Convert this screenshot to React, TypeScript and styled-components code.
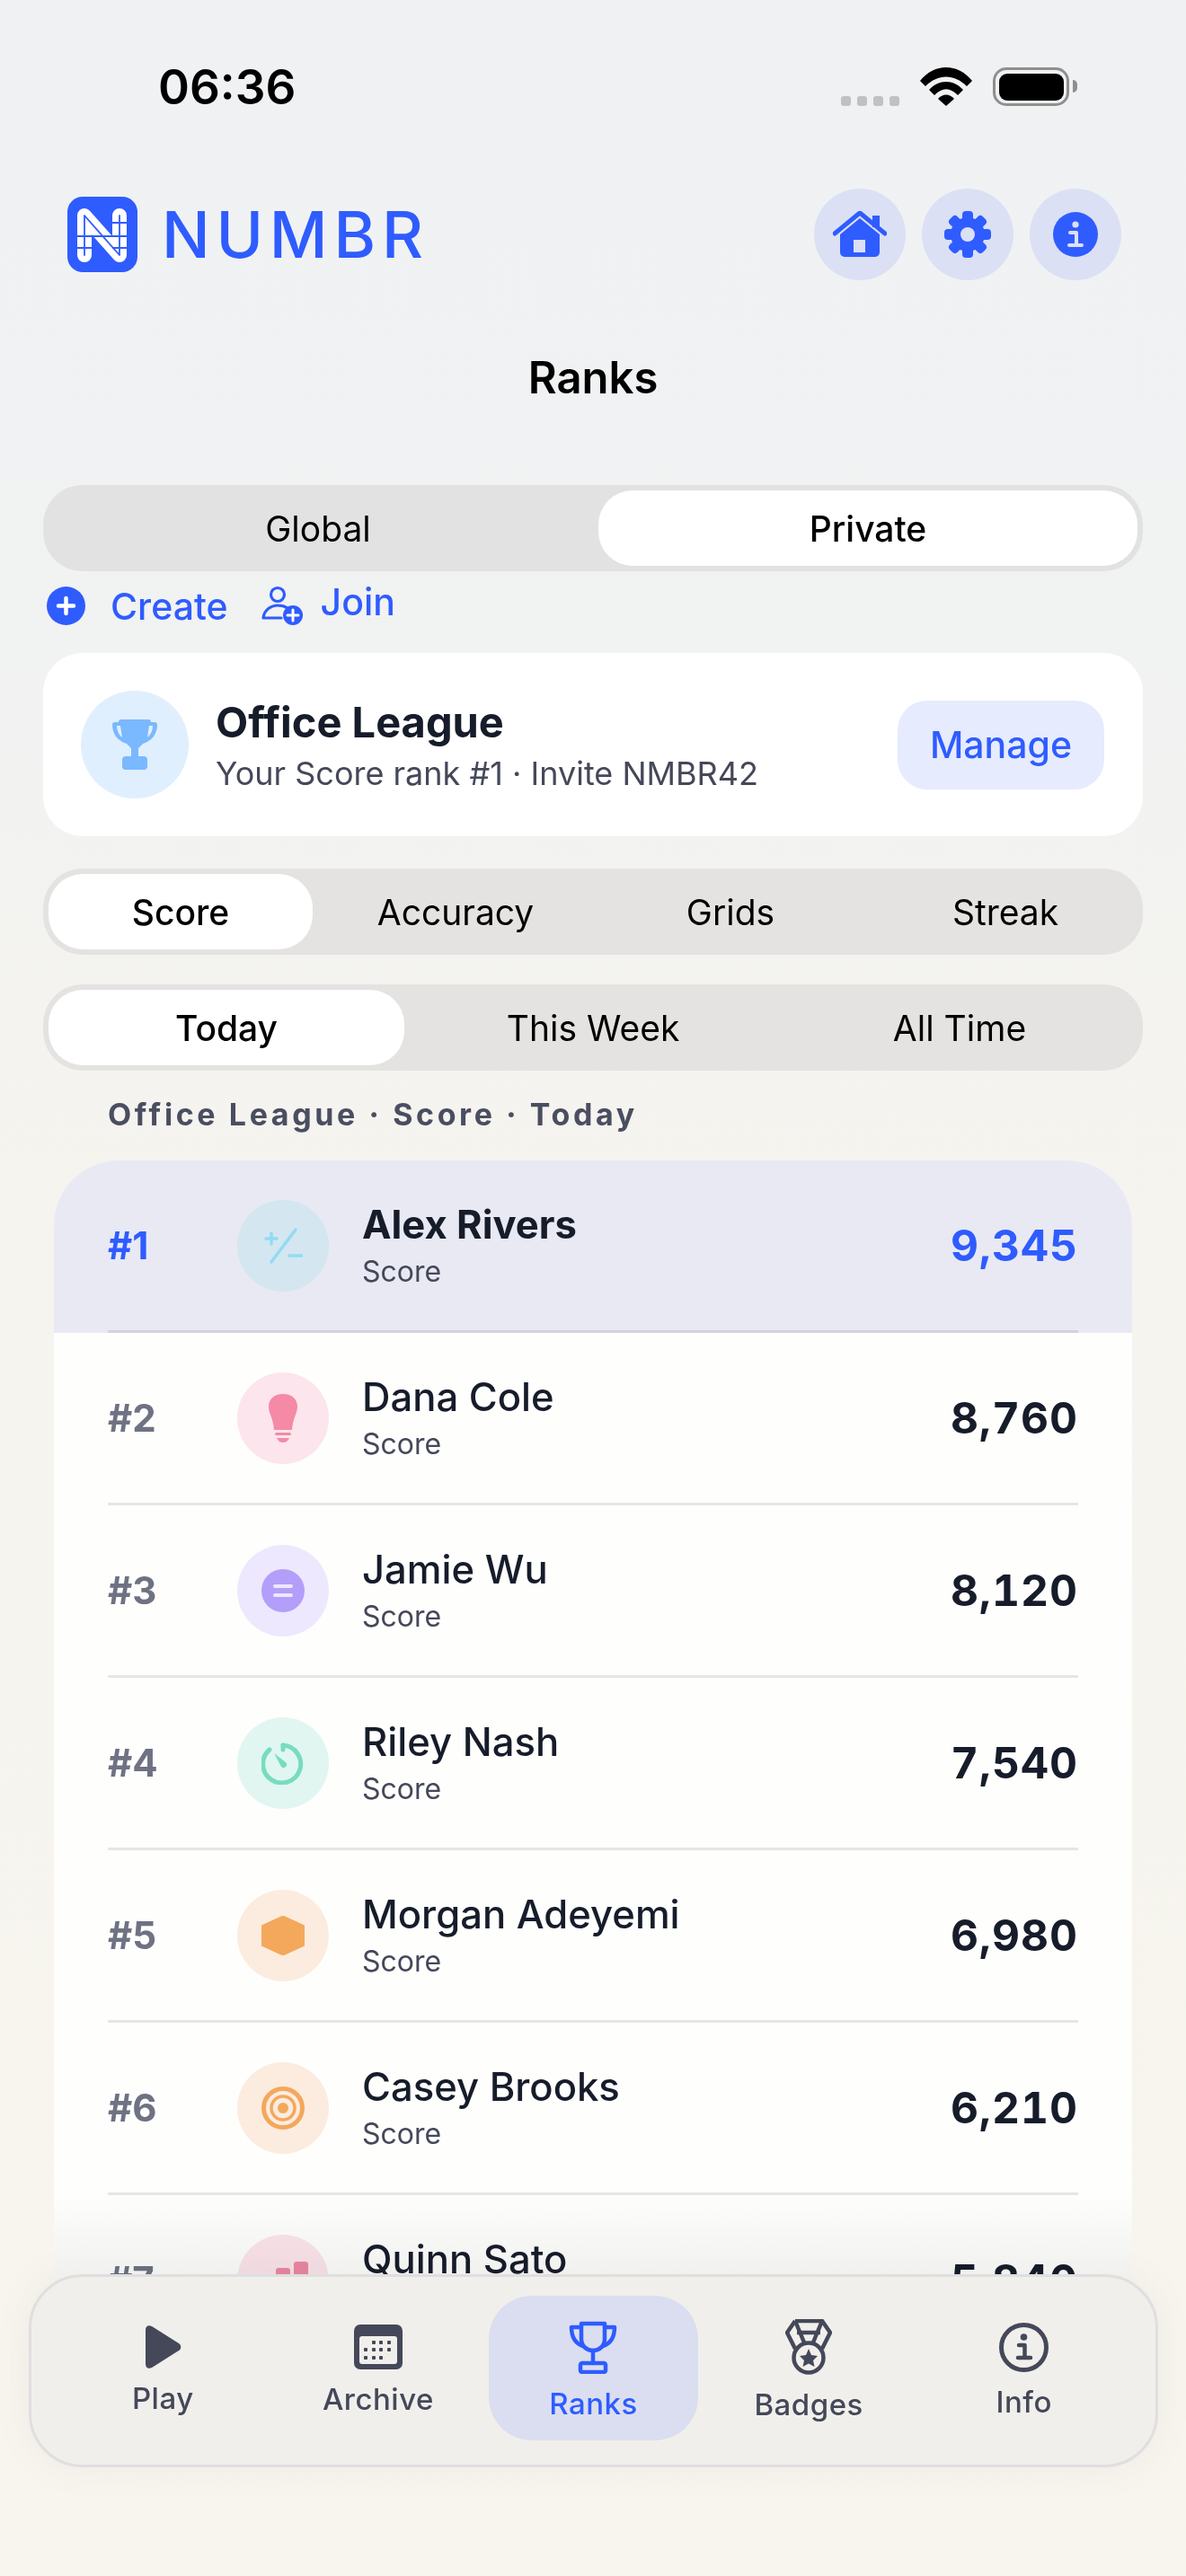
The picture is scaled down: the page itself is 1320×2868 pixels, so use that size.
import React from 'react';
import styled, { createGlobalStyle } from 'styled-components';

const BLUE = '#2f5cff';
const INK = '#161c2a';
const SLATE = '#454859';

const GlobalStyle = createGlobalStyle`
	html, body {
		margin: 0;
		padding: 0;
	}
	* {
		box-sizing: border-box;
	}
	body {
		font-family: Inter, "Liberation Sans", sans-serif;
	}
`;

const Page = styled.div`
	width: 1320px;
	height: 2868px;
	display: flex;
	flex-direction: column;
	overflow: hidden;
	background: linear-gradient(180deg, #f0f1f3 0%, #f1f2f2 25%, #f6f4ee 50%, #f8f5ef 100%);
`;

const StatusBar = styled.div`
	height: 140px;
	padding: 75px 130px 0 176px;
	display: flex;
	justify-content: space-between;
	align-items: flex-start;
`;

const Clock = styled.div`
	font-size: 53px;
	line-height: 44px;
	font-weight: 600;
	color: #000;
`;

const StatusIcons = styled.div`
	display: flex;
	align-items: flex-end;
	gap: 23px;
`;

const SignalDots = styled.div`
	display: flex;
	gap: 7px;
`;

const SignalDot = styled.span`
	width: 11px;
	height: 11px;
	border-radius: 3px;
	background: #c1c1c1;
`;

const Battery = styled.div`
	position: relative;
	width: 85px;
	height: 43px;
	border: 3.5px solid #8f8f8f;
	border-radius: 15px;
	padding: 3.5px;

	&::before {
		content: '';
		display: block;
		height: 100%;
		background: #000;
		border-radius: 9px;
	}

	&::after {
		content: '';
		position: absolute;
		right: -12px;
		top: 11px;
		width: 5px;
		height: 14px;
		background: #8f8f8f;
		border-radius: 0 5px 5px 0;
	}
`;

const Header = styled.div`
	height: 102px;
	margin-top: 70px;
	padding: 0 72px 0 75px;
	display: flex;
	justify-content: space-between;
	align-items: center;
`;

const Brand = styled.div`
	display: flex;
	align-items: center;
	gap: 27px;
`;

const LogoMark = styled.svg`
	width: 78px;
	height: 84px;
	display: block;
`;

const Wordmark = styled.div`
	font-size: 71px;
	line-height: 72px;
	font-weight: 550;
	letter-spacing: 6.8px;
	color: ${BLUE};
`;

const HeaderActions = styled.div`
	display: flex;
	gap: 18px;
`;

const RoundButton = styled.div`
	width: 102px;
	height: 102px;
	border-radius: 50%;
	background: #dbe0f4;
	display: flex;
	align-items: center;
	justify-content: center;
`;

const Title = styled.div`
	margin-top: 84px;
	height: 50px;
	line-height: 50px;
	text-align: center;
	font-size: 49px;
	font-weight: 600;
	color: #000;
`;

const Segment = styled.div<{ $cols: number }>`
	margin: 0 48px;
	height: 96px;
	padding: 6px;
	border-radius: 44px;
	display: grid;
	grid-template-columns: repeat(${(p) => p.$cols}, 1fr);
	gap: 12px;
	background: #e4e3e1;
`;

const ModeSegment = styled(Segment)`
	margin-top: 94px;
	background: #e2e2e2;
`;

const SegmentItem = styled.div<{ $active?: boolean }>`
	display: flex;
	align-items: center;
	justify-content: center;
	border-radius: 38px;
	font-size: 39px;
	font-weight: ${(p) => (p.$active ? 500 : 400)};
	color: #000;
	background: ${(p) => (p.$active ? '#fff' : 'transparent')};
`;

const ActionRow = styled.div`
	margin-top: 16px;
	height: 44px;
	padding-left: 52px;
	display: flex;
	align-items: center;
`;

const ActionLabel = styled.span<{ $raised?: boolean }>`
	font-size: 41px;
	font-weight: 500;
	color: ${BLUE};
	line-height: 44px;
	transform: translateY(${(p) => (p.$raised ? -4 : 1)}px);
`;

const CreateLabel = styled(ActionLabel)`
	margin: 0 37px 0 28px;
`;

const JoinLabel = styled(ActionLabel)`
	margin-left: 20px;
`;

const LeagueCard = styled.div`
	margin: 31px 48px 36px;
	height: 204px;
	padding: 0 43px 0 42px;
	border-radius: 44px;
	background: #fff;
	display: flex;
	align-items: center;
`;

const LeagueIcon = styled.div`
	width: 120px;
	height: 120px;
	border-radius: 50%;
	background: #e0effe;
	display: flex;
	align-items: center;
	justify-content: center;
	margin-right: 30px;
`;

const LeagueText = styled.div`
	flex: 1;
	display: flex;
	flex-direction: column;
	gap: 8px;
`;

const LeagueName = styled.div`
	font-size: 47px;
	line-height: 56px;
	font-weight: 700;
	color: ${INK};
`;

const LeagueMeta = styled.div`
	font-size: 36px;
	line-height: 42px;
	font-weight: 400;
	color: ${SLATE};
`;

const ManageButton = styled.div`
	width: 230px;
	height: 99px;
	border-radius: 33px;
	background: #e6ebfd;
	color: ${BLUE};
	font-size: 41px;
	font-weight: 500;
	display: flex;
	align-items: center;
	justify-content: center;
`;

const FilterStack = styled.div`
	display: flex;
	flex-direction: column;
	gap: 33px;
`;

const SectionLabel = styled.div`
	margin: 29px 120px 0;
	height: 40px;
	line-height: 40px;
	font-size: 34px;
	font-weight: 700;
	letter-spacing: 3.6px;
	color: #4a4e61;
`;

const ListArea = styled.div`
	position: relative;
	flex: 1;
	min-height: 0;
	margin: 31px 60px 0;
	overflow: hidden;
	border-radius: 72px 72px 0 0;
	background: #fefefd;

	&::after {
		content: '';
		position: absolute;
		left: 0;
		right: 0;
		bottom: 0;
		height: 90px;
		background: linear-gradient(180deg, #ffffff, #f2f2f2);
		mix-blend-mode: multiply;
	}
`;

const Row = styled.div<{ $me?: boolean }>`
	height: 192px;
	padding: 0 60px;
	background: ${(p) => (p.$me ? '#e8e9f3' : 'transparent')};
`;

const RowInner = styled.div<{ $me?: boolean }>`
	height: 100%;
	display: flex;
	align-items: center;
	border-bottom: 3px solid ${(p) => (p.$me ? '#d2d3de' : '#e6e6e8')};
`;

const Rank = styled.div<{ $me?: boolean }>`
	width: 144px;
	font-size: 42px;
	font-weight: 700;
	color: ${(p) => (p.$me ? BLUE : '#6f7283')};
`;

const Avatar = styled.div<{ $bg: string }>`
	width: 102px;
	height: 102px;
	border-radius: 50%;
	margin-right: 37px;
	background: ${(p) => p.$bg};
	display: flex;
	align-items: center;
	justify-content: center;
`;

const PlayerText = styled.div`
	flex: 1;
	display: flex;
	flex-direction: column;
	gap: 6px;
`;

const PlayerName = styled.div<{ $me?: boolean }>`
	font-size: ${(p) => (p.$me ? 43.6 : 43.6)}px;
	line-height: 52px;
	font-weight: ${(p) => (p.$me ? 700 : 550)};
	color: ${INK};
`;

const PlayerMeta = styled.div`
	font-size: 32px;
	line-height: 40px;
	color: ${SLATE};
`;

const Points = styled.div<{ $me?: boolean }>`
	font-size: 48px;
	font-weight: 700;
	letter-spacing: 1px;
	font-variant-numeric: tabular-nums;
	color: ${(p) => (p.$me ? BLUE : INK)};
`;

const TabBar = styled.div`
	height: 215px;
	margin: 0 31px 121px 32px;
	padding: 21px 30px 27px;
	border: 3px solid #dfdfdf;
	border-radius: 60px;
	background: #f0efeb;
	box-shadow: 0 0 40px rgba(120, 120, 120, 0.08);
	display: grid;
	grid-template-columns: repeat(5, 1fr);
	gap: 7px;
`;

const TabItem = styled.div<{ $active?: boolean }>`
	display: flex;
	flex-direction: column;
	align-items: center;
	justify-content: center;
	gap: 19px;
	border-radius: 48px;
	background: ${(p) => (p.$active ? '#dadef0' : 'transparent')};
	color: ${(p) => (p.$active ? BLUE : SLATE)};
`;

const TabLabel = styled.div`
	font-size: 33px;
	line-height: 28px;
	font-weight: 500;
	letter-spacing: 0.5px;
`;

const WifiIcon = () => (
	<svg width="58" height="43" viewBox="0 0 58 43">
		<path d="M0 15 C16 -5 42 -5 58 15 L52 21 C38 7 20 7 6 21Z M10 25 C21 13 37 13 48 25 L42 31 C33 22 25 22 16 31Z M20 35 C25 29 33 29 38 35 L29 43Z" fill="#000" />
	</svg>
);

const Logo = () => (
	<LogoMark viewBox="0 0 78 84">
		<rect width="78" height="84" rx="17" fill={BLUE} />
		<path d="M19 65 V21 L58 65 V21" fill="none" stroke="#fff" strokeWidth="16" strokeLinecap="round" strokeLinejoin="round" />
		<g fill="none" stroke={BLUE} strokeWidth="1.8">
			<path d="M19 65 V21 L58 65 V21" strokeLinecap="round" strokeLinejoin="round" />
			<path d="M11 44 H66 M11 57 H27 M50 57 H66 M50 29 H66" />
		</g>
	</LogoMark>
);

const HomeIcon = () => (
	<svg width="60" height="52" viewBox="0 0 60 52" fill={BLUE}>
		<path d="M30 8 L8 26 V46 a5 5 0 0 0 5 5 H47 a5 5 0 0 0 5 -5 V26Z M23 32 H36 V46 H23Z" fillRule="evenodd" />
		<path d="M2 25 L30 2 L58 25" fill="none" stroke={BLUE} strokeWidth="5" strokeLinecap="round" strokeLinejoin="round" />
		<rect x="44" y="5" width="8" height="13" />
	</svg>
);

const GearIcon = () => (
	<svg width="52" height="52" viewBox="0 0 52 52">
		<g fill={BLUE}>
			{[0, 45, 90, 135, 180, 225, 270, 315].map((a) => (
				<rect key={a} x="20" y="0" width="12" height="16" rx="4" transform={`rotate(${a} 26 26)`} />
			))}
			<circle cx="26" cy="26" r="19" />
		</g>
		<circle cx="26" cy="26" r="8" fill="#dbe0f4" />
	</svg>
);

const InfoFilled = () => (
	<svg width="50" height="50" viewBox="0 0 50 50">
		<circle cx="25" cy="25" r="25" fill={BLUE} />
		<circle cx="25" cy="14" r="3.6" fill="#dbe0f4" />
		<path d="M19 23 H26 V36 M18 37 H32" fill="none" stroke="#dbe0f4" strokeWidth="4" strokeLinecap="round" strokeLinejoin="round" />
	</svg>
);

const PlusCircle = () => (
	<svg width="43" height="43" viewBox="0 0 43 43">
		<circle cx="21.5" cy="21.5" r="21.5" fill={BLUE} />
		<path d="M21.5 13 V30 M13 21.5 H30" stroke="#fff" strokeWidth="4.5" strokeLinecap="round" />
	</svg>
);

const JoinIcon = () => (
	<svg width="46" height="44" viewBox="0 0 46 44">
		<circle cx="18" cy="10" r="7.5" fill="none" stroke={BLUE} strokeWidth="3.2" />
		<path d="M2 36 C3 26 12 22 18 22 C22 22 26 23 29 25 M2 36 H22" fill="none" stroke={BLUE} strokeWidth="3.2" strokeLinecap="round" />
		<circle cx="35" cy="33" r="11" fill={BLUE} />
		<path d="M35 27 V39 M29 33 H41" stroke="#fff" strokeWidth="3" strokeLinecap="round" />
	</svg>
);

const TrophySolid = () => (
	<svg width="50" height="56" viewBox="0 0 50 56">
		<path d="M10 0 H40 a3 3 0 0 1 3 3 H47 a3 3 0 0 1 3 3 C50 16 44 24 34 27 L29 32 V42 H21 V32 L16 27 C6 24 0 16 0 6 a3 3 0 0 1 3 -3 H7 a3 3 0 0 1 3 -3Z" fill="#7ab8ff" />
		<path d="M5 7 C5 13 8 18 11 20 L9 7Z M45 7 C45 13 42 18 39 20 L41 7Z" fill="#e0effe" />
		<rect x="11" y="41" width="28" height="15" rx="4" fill="#7ab8ff" />
	</svg>
);

const MathIcon = () => (
	<svg width="44" height="42" viewBox="0 0 44 42" fill="none" stroke="#90dcf3" strokeLinecap="round">
		<path d="M9 7 V19 M3 13 H15" strokeWidth="3.5" />
		<path d="M36 3 L9 39" strokeWidth="3.5" />
		<path d="M29 32 H43" strokeWidth="3.5" />
	</svg>
);

const BulbIcon = () => (
	<svg width="32" height="54" viewBox="0 0 32 54" fill="#f48aa6">
		<path d="M16 0 C26 0 32 6 32 14 C32 22 27 26 26 40 H6 C5 26 0 22 0 14 C0 6 6 0 16 0Z" />
		<rect x="7" y="43" width="18" height="3" rx="1.5" />
		<path d="M9 49 H23 C22 52 19 54 16 54 C13 54 10 52 9 49Z" />
	</svg>
);

const EqualsIcon = () => (
	<svg width="48" height="48" viewBox="0 0 48 48">
		<circle cx="24" cy="24" r="24" fill="#b39efa" />
		<path d="M15 19 H33 M15 29 H33" stroke="#ede8fe" strokeWidth="4" strokeLinecap="round" />
	</svg>
);

const TimerIcon = () => (
	<svg width="48" height="48" viewBox="0 0 48 48" fill="none">
		<path d="M24 4 A21 21 0 1 1 9 9" stroke="#77dcc0" strokeWidth="5" strokeLinecap="round" />
		<path d="M24 4 V9" stroke="#77dcc0" strokeWidth="5" strokeLinecap="round" />
		<path d="M14 13 L27 23 a3.5 3.5 0 0 1 -5 5Z" fill="#77dcc0" />
	</svg>
);

const HexIcon = () => (
	<svg width="48" height="44" viewBox="0 0 48 44">
		<path d="M24 0 L48 11 V33 L24 44 L0 33 V11Z" fill="#f3a85c" stroke="#f3a85c" strokeLinejoin="round" />
	</svg>
);

const TargetIcon = () => (
	<svg width="48" height="48" viewBox="0 0 48 48" fill="none" stroke="#f3a85c">
		<circle cx="24" cy="24" r="21.5" strokeWidth="5" />
		<circle cx="24" cy="24" r="13" strokeWidth="3.5" />
		<circle cx="24" cy="24" r="6" fill="#f3a85c" strokeWidth="0" />
	</svg>
);

const BarsIcon = () => (
	<svg width="56" height="48" viewBox="0 0 56 48" fill="#ef88a4">
		<rect x="0" y="24" width="16" height="24" rx="3" />
		<rect x="20" y="10" width="16" height="38" rx="3" />
		<rect x="40" y="3" width="16" height="45" rx="3" />
	</svg>
);

const PlayIcon = () => (
	<svg width="42" height="48" viewBox="0 0 42 48" fill="currentColor">
		<path d="M2 5 C2 1 5 -1 9 1 L39 20 C42 22 42 26 39 28 L9 47 C5 49 2 47 2 43Z" />
	</svg>
);

const ArchiveIcon = () => (
	<svg width="54" height="50" viewBox="0 0 54 50">
		<rect width="54" height="50" rx="7" fill="currentColor" />
		<rect x="6" y="13" width="42" height="31" rx="3" fill="#f0efeb" />
		<g fill="currentColor">
			{[
				[22, 20], [30, 20], [39, 20],
				[13, 28], [22, 28], [30, 28], [39, 28],
				[13, 37], [22, 37], [30, 37]
			].map(([x, y]) => (
				<rect key={`${x}-${y}`} x={x - 2} y={y - 2} width="4" height="4" rx="1" />
			))}
		</g>
	</svg>
);

const TrophyLine = () => (
	<svg width="54" height="59" viewBox="0 0 54 59" fill="none" stroke="currentColor" strokeWidth="4.5" strokeLinejoin="round" strokeLinecap="round">
		<path d="M14 3 H40 V20 C40 28 34 33 27 33 C20 33 14 28 14 20Z" />
		<path d="M14 7 H3 C3 17 7 25 16 28 M40 7 H51 C51 17 47 25 38 28" />
		<path d="M27 33 V47" />
		<rect x="13" y="47" width="28" height="10" rx="2" />
	</svg>
);

const BadgeIcon = () => (
	<svg width="52" height="62" viewBox="0 0 52 62" fill="none" stroke="currentColor" strokeWidth="4.5" strokeLinejoin="round">
		<path d="M11 2 H41 L50 15 L41 33 M11 2 L2 15 L11 33" />
		<path d="M11 2 L21 26 M41 2 L31 26 M13 15 H39" />
		<circle cx="26" cy="43" r="16.5" />
		<path d="M26 33 L29 40 L36 41 L31 46 L32.5 53 L26 49.5 L19.5 53 L21 46 L16 41 L23 40Z" fill="currentColor" strokeWidth="0" />
	</svg>
);

const InfoLine = () => (
	<svg width="55" height="55" viewBox="0 0 55 55" fill="none" stroke="currentColor">
		<circle cx="27.5" cy="27.5" r="25" strokeWidth="5" />
		<circle cx="27.5" cy="16" r="3.8" fill="currentColor" strokeWidth="0" />
		<path d="M22 25 H28.5 V38 M21 39 H35" strokeWidth="4.5" strokeLinecap="round" strokeLinejoin="round" />
	</svg>
);

const players = [
	{ name: 'Alex Rivers', points: '9,345', bg: '#d4e6f0', icon: <MathIcon /> },
	{ name: 'Dana Cole', points: '8,760', bg: '#fce5ec', icon: <BulbIcon /> },
	{ name: 'Jamie Wu', points: '8,120', bg: '#ede8fe', icon: <EqualsIcon /> },
	{ name: 'Riley Nash', points: '7,540', bg: '#e1f6f1', icon: <TimerIcon /> },
	{ name: 'Morgan Adeyemi', points: '6,980', bg: '#fcecdf', icon: <HexIcon /> },
	{ name: 'Casey Brooks', points: '6,210', bg: '#fcecdf', icon: <TargetIcon /> },
	{ name: 'Quinn Sato', points: '5,840', bg: '#fce5ec', icon: <BarsIcon /> }
];

const tabs = [
	{ label: 'Play', icon: <PlayIcon /> },
	{ label: 'Archive', icon: <ArchiveIcon /> },
	{ label: 'Ranks', icon: <TrophyLine />, active: true },
	{ label: 'Badges', icon: <BadgeIcon /> },
	{ label: 'Info', icon: <InfoLine /> }
];

const App = () => {
	return (
		<Page>
			<GlobalStyle />
			<StatusBar>
				<Clock>06:36</Clock>
				<StatusIcons>
					<SignalDots>
						<SignalDot />
						<SignalDot />
						<SignalDot />
						<SignalDot />
					</SignalDots>
					<WifiIcon />
					<Battery />
				</StatusIcons>
			</StatusBar>
			<Header>
				<Brand>
					<Logo />
					<Wordmark>NUMBR</Wordmark>
				</Brand>
				<HeaderActions>
					<RoundButton><HomeIcon /></RoundButton>
					<RoundButton><GearIcon /></RoundButton>
					<RoundButton><InfoFilled /></RoundButton>
				</HeaderActions>
			</Header>
			<Title>Ranks</Title>
			<ModeSegment $cols={2}>
				<SegmentItem>Global</SegmentItem>
				<SegmentItem $active>Private</SegmentItem>
			</ModeSegment>
			<ActionRow>
				<PlusCircle />
				<CreateLabel>Create</CreateLabel>
				<JoinIcon />
				<JoinLabel $raised>Join</JoinLabel>
			</ActionRow>
			<LeagueCard>
				<LeagueIcon><TrophySolid /></LeagueIcon>
				<LeagueText>
					<LeagueName>Office League</LeagueName>
					<LeagueMeta>Your Score rank #1 · Invite NMBR42</LeagueMeta>
				</LeagueText>
				<ManageButton>Manage</ManageButton>
			</LeagueCard>
			<FilterStack>
				<Segment $cols={4}>
					<SegmentItem $active>Score</SegmentItem>
					<SegmentItem>Accuracy</SegmentItem>
					<SegmentItem>Grids</SegmentItem>
					<SegmentItem>Streak</SegmentItem>
				</Segment>
				<Segment $cols={3}>
					<SegmentItem $active>Today</SegmentItem>
					<SegmentItem>This Week</SegmentItem>
					<SegmentItem>All Time</SegmentItem>
				</Segment>
			</FilterStack>
			<SectionLabel>Office League · Score · Today</SectionLabel>
			<ListArea>
				{players.map((player, i) => (
					<Row key={player.name} $me={i === 0}>
						<RowInner $me={i === 0}>
							<Rank $me={i === 0}>#{i + 1}</Rank>
							<Avatar $bg={player.bg}>{player.icon}</Avatar>
							<PlayerText>
								<PlayerName $me={i === 0}>{player.name}</PlayerName>
								<PlayerMeta>Score</PlayerMeta>
							</PlayerText>
							<Points $me={i === 0}>{player.points}</Points>
						</RowInner>
					</Row>
				))}
			</ListArea>
			<TabBar>
				{tabs.map((tab) => (
					<TabItem key={tab.label} $active={tab.active}>
						{tab.icon}
						<TabLabel>{tab.label}</TabLabel>
					</TabItem>
				))}
			</TabBar>
		</Page>
	);
};

export default App;
